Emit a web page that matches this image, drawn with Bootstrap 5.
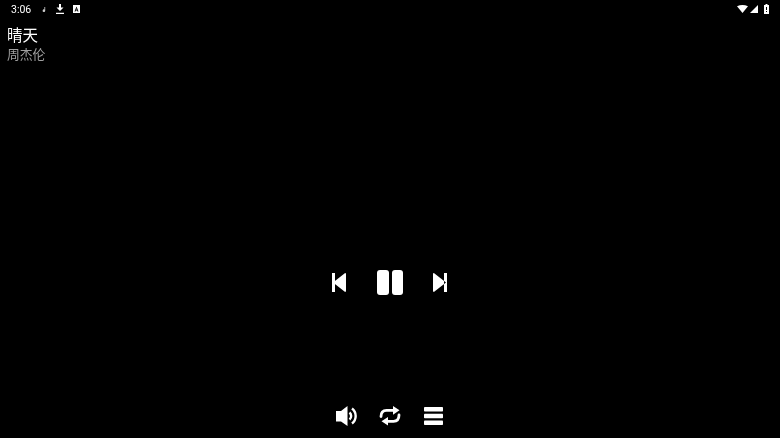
<!DOCTYPE html>
<html lang="zh-CN">
<head>
    <meta charset="UTF-8">
    <meta name="viewport" content="width=device-width, initial-scale=1.0">
    <title>晴天</title>
    <link href="https://cdn.jsdelivr.net/npm/bootstrap@5.3.0/dist/css/bootstrap.min.css" rel="stylesheet">
    <style>
        html, body { height: 100%; background: #000; overflow: hidden; }
        .player-page { height: 438px; width: 780px; font-family: "Liberation Sans", "Noto Sans CJK SC", sans-serif; }
        .status-row { height: 18px; padding: 0 11px; }
        .status-time { font: 10.5px/18px Roboto, sans-serif; color: #fff; width: 31px; padding-top: 1px; will-change: opacity; }
        .icon-download { margin-left: 10px; }
        .icon-keyboard { margin-left: 9px; }
        .icon-signal { margin-left: 2px; }
        .icon-battery { margin-left: 6px; }
        .song-info { padding: 8px 0 0 7px; will-change: opacity; }
        .song-title { font-size: 15.5px; line-height: 20px; color: #fff; }
        .song-artist { font-size: 12.8px; line-height: 18px; color: #a0a0a0; }
        .main-controls { height: 25px; margin-top: 206px; gap: 30px; padding-right: 1px; }
        .icon-prev { margin-right: 1px; }
        .extra-controls { height: 22px; margin-top: 110px; gap: 22px; padding-right: 1px; }
        .icon-repeat { margin-right: 1px; }
        svg { display: block; fill: #fff; flex: none; }
    </style>
</head>
<body>
    <div class="player-page d-flex flex-column">
        <!-- status bar -->
        <div class="status-row d-flex align-items-center">
            <span class="status-time">3:06</span>
            <svg width="4" height="5" viewBox="0 0 5 6" opacity=".8"><path d="M3 0h1v4.400A1.600 1.600 0 1 1 3 3z"/></svg>
            <svg class="icon-download" width="8" height="10" viewBox="0 0 8 10"><path d="M3 0h2v3.500h2.500L4 7 .5 3.500H3zM0 8.700h8V10H0z"/></svg>
            <svg class="icon-keyboard" width="7" height="8" viewBox="0 0 7 8"><path fill-rule="evenodd" d="M0 0h7v8H0zM3.500 1.500 1.500 6.500h1l.4-1h1.200l.4 1h1zM3.500 3.200l.4 1.400h-.8z"/></svg>
            <div class="ms-auto d-flex align-items-center">
                <svg width="11" height="8" viewBox="0 0 11 8"><path d="M0 1.300Q5.500-1.300 11 1.300L5.500 8z"/></svg>
                <svg class="icon-signal" width="8" height="8" viewBox="0 0 8 8"><path d="M8 0v8H0z"/></svg>
                <svg class="icon-battery" width="5" height="10" viewBox="0 0 5 10"><path fill-rule="evenodd" d="M1.500 0h2v1H5v9H0V1h1.500zM2 3v3h1V3zM2 7v1h1V7z"/></svg>
            </div>
        </div>

        <div class="song-info">
            <div class="song-title">晴天</div>
            <div class="song-artist">周杰伦</div>
        </div>

        <!-- play controls -->
        <div class="main-controls d-flex justify-content-center align-items-center">
            <svg class="icon-prev" width="14" height="19" viewBox="0 0 14 19"><path d="M0 0h3v19H0zM12.800.2Q14-.2 14 1.200v16.600q0 1.400-1.200 1L1 9.500z"/></svg>
            <svg width="26" height="25" viewBox="0 0 26 25"><rect width="12" height="25" rx="3"/><rect x="15" width="11" height="25" rx="3"/></svg>
            <svg width="14" height="19" viewBox="0 0 14 19"><path d="M11 0h3v19h-3zM1.200.2Q0-.2 0 1.200v16.600q0 1.400 1.200 1L13 9.500z"/></svg>
        </div>

        <!-- volume, repeat, playlist -->
        <div class="extra-controls d-flex justify-content-center align-items-center">
            <svg width="21" height="20" viewBox="0 0 21 20"><path d="M0 5h5l6.500-5v20L5 15.500H0z"/><path fill="none" stroke="#fff" stroke-width="2.400" d="M13.500 6.500a4.500 4.500 0 0 1 0 7M16 2.500a9.500 9.500 0 0 1 0 15"/></svg>
            <svg class="icon-repeat" width="22" height="20" viewBox="0 0 22 20"><path fill="none" stroke="#fff" stroke-width="2.800" stroke-linecap="round" d="M2 10.500C2 6.500 4 4.300 7.500 4.300H15M20 9c0 4-2 6.300-5.500 6.300H8"/><path d="M14 0l6.500 4.300L14 8.700zM9 11v8.500l-6.500-4.200z"/></svg>
            <svg width="19" height="18" viewBox="0 0 19 18"><rect width="19" height="4.500" rx=".8"/><rect y="6.700" width="19" height="4.500" rx=".8"/><rect y="13.500" width="19" height="4.500" rx=".8"/></svg>
        </div>
    </div>
    <script src="https://cdn.jsdelivr.net/npm/bootstrap@5.3.0/dist/js/bootstrap.bundle.min.js"></script>
</body>
</html>
